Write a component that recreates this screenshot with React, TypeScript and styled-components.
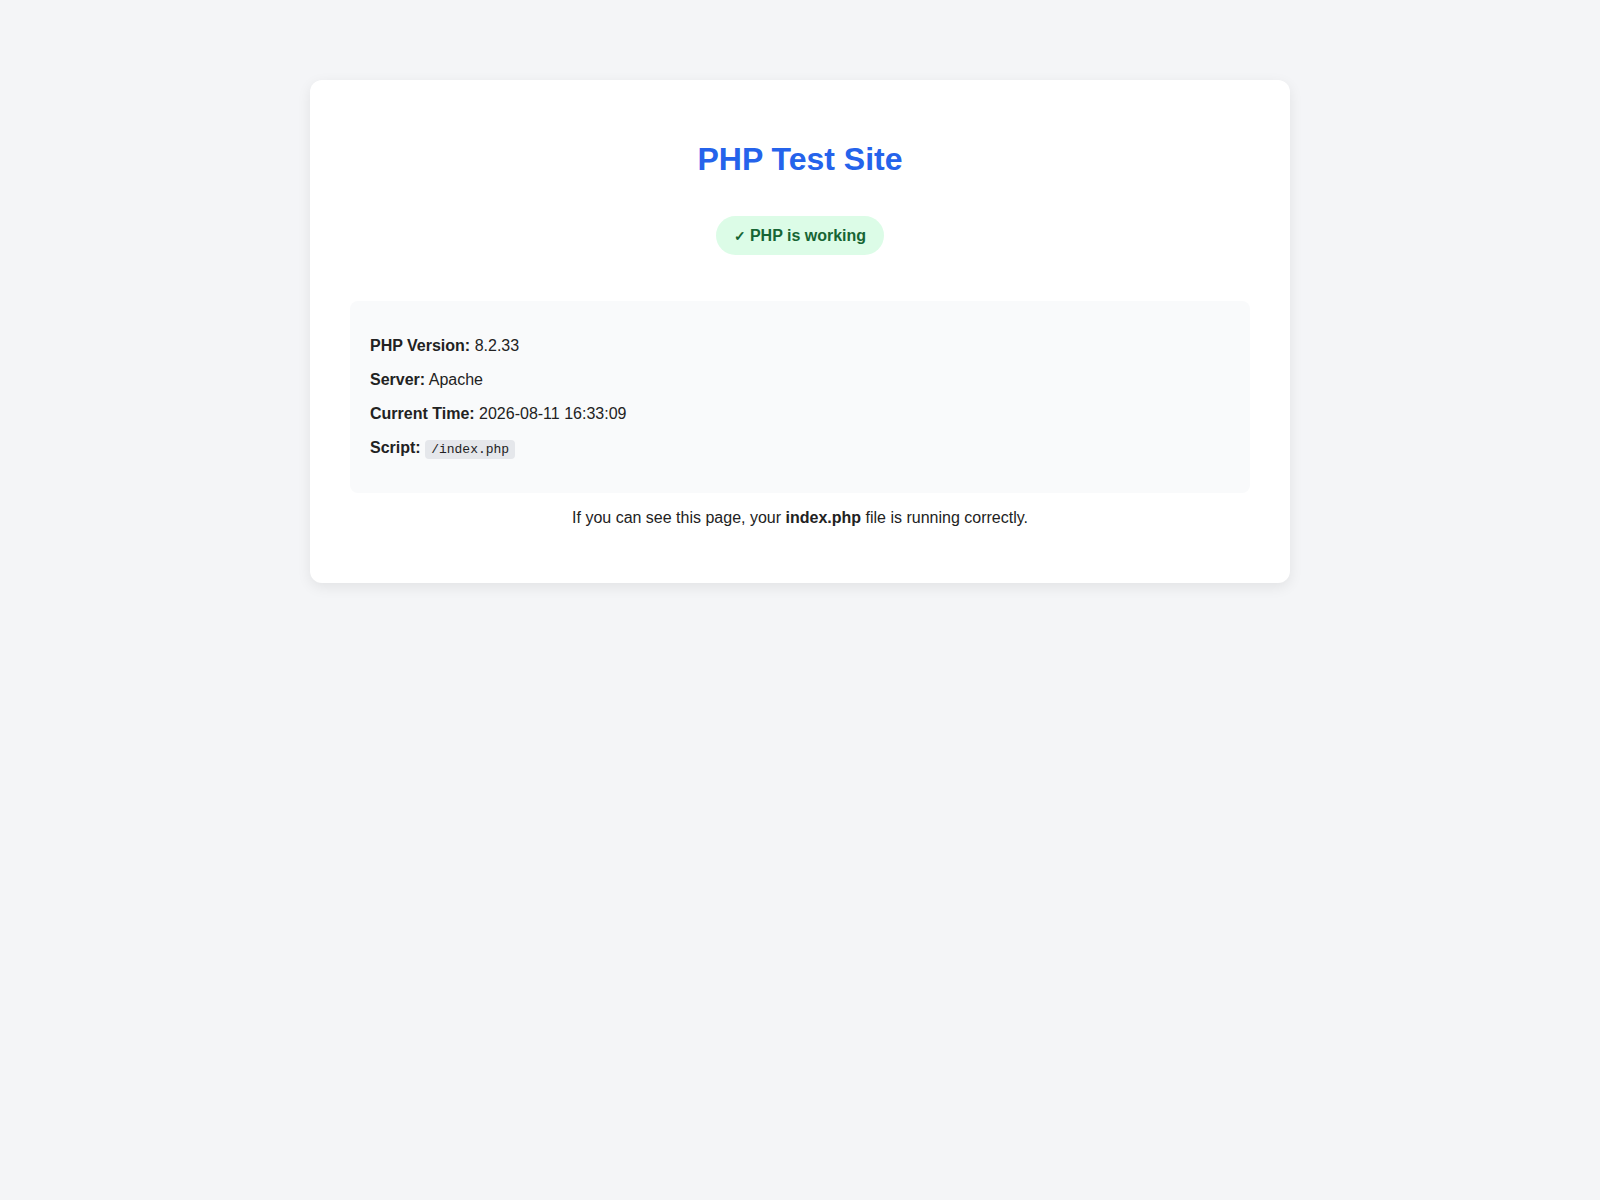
import styled, { createGlobalStyle } from 'styled-components';

const GlobalStyle = createGlobalStyle`
  body {
    margin: 0;
    background: #f4f5f7;
    font-family: 'Liberation Sans', Arial, sans-serif;
    color: #222;
  }
`;

const Page = styled.main`
  padding-top: 80px;
  padding-bottom: 80px;
`;

const Card = styled.section`
  width: 900px;
  margin: 0 auto;
  padding: 40px;
  background: #fff;
  border-radius: 12px;
  box-shadow: 0 4px 14px rgba(0, 0, 0, 0.08);
  text-align: center;
`;

const Title = styled.h1`
  margin: 21px 0 0;
  font-size: 32px;
  font-weight: 700;
  color: #2563eb;
`;

const BadgeRow = styled.div`
  margin-top: 38px;
`;

const Badge = styled.span`
  display: inline-block;
  padding: 10px 18px;
  line-height: 19px;
  border-radius: 20px;
  background: #dcfce7;
  color: #166534;
  font-size: 16px;
  font-weight: 700;
`;

const Check = styled.span`
  font-size: 14px;
  line-height: 1;
  margin-right: 4px;
`;

const InfoBox = styled.div`
  margin-top: 46px;
  padding: 20px;
  background: #f9fafb;
  border-radius: 8px;
  text-align: left;
`;

const InfoLine = styled.p`
  margin: 16px 0;
  font-size: 16px;
`;

const Code = styled.code`
  background: #e5e7eb;
  padding: 2px 6px;
  border-radius: 4px;
  font-family: 'Liberation Mono', monospace;
  font-size: 13px;
`;

const Footer = styled.p`
  margin: 16px 0;
  font-size: 16px;
`;

const info = [
  { label: 'PHP Version:', value: '8.2.33' },
  { label: 'Server:', value: 'Apache' },
  { label: 'Current Time:', value: '2026-08-11 16:33:09' },
];

export default function App() {
  return (
    <>
      <GlobalStyle />
      <Page>
        <Card>
          <Title>PHP Test Site</Title>
          <BadgeRow>
            <Badge>
              <Check>✓</Check>PHP is working
            </Badge>
          </BadgeRow>
          <InfoBox>
            {info.map(({ label, value }) => (
              <InfoLine key={label}>
                <strong>{label}</strong> {value}
              </InfoLine>
            ))}
            <InfoLine>
              <strong>Script:</strong> <Code>/index.php</Code>
            </InfoLine>
          </InfoBox>
          <Footer>
            If you can see this page, your <strong>index.php</strong> file is
            running correctly.
          </Footer>
        </Card>
      </Page>
    </>
  );
}
